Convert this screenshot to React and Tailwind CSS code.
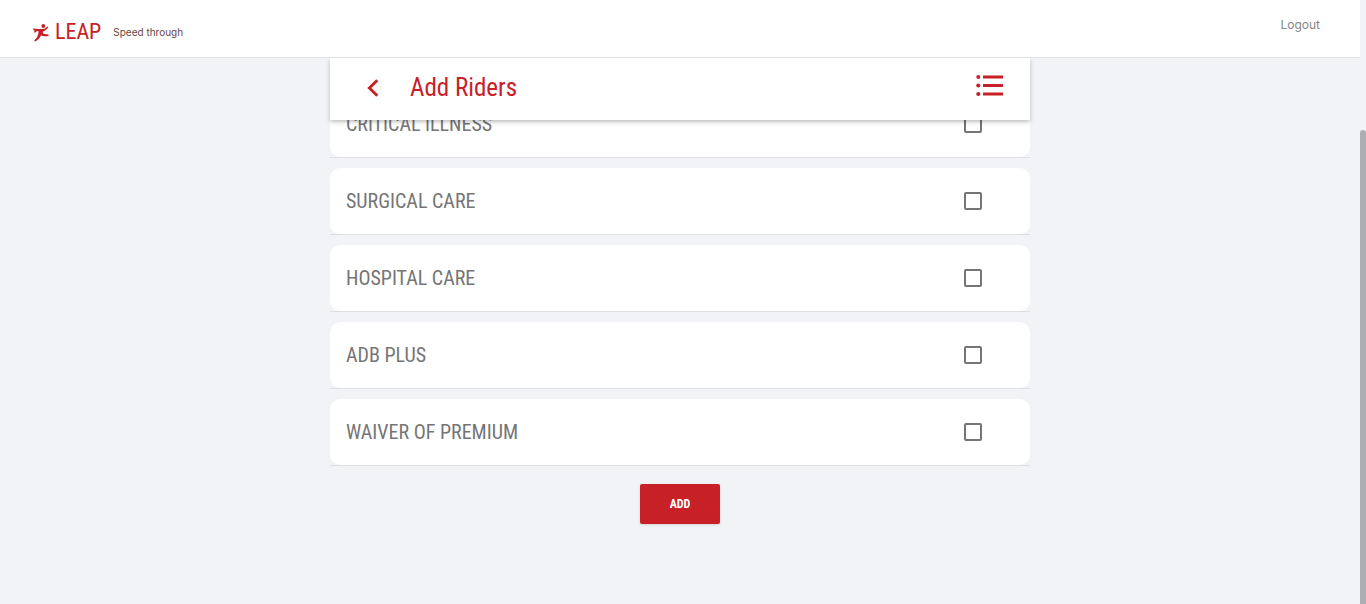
const riders = ['Critical Illness', 'Surgical Care', 'Hospital Care', 'ADB Plus', 'Waiver of Premium'];
const brandFont = "font-['Roboto_Condensed','Roboto',sans-serif]";

function Runner() {
  return (
    <svg viewBox="0 0 16 18" className="mt-px h-[18px] w-4" aria-hidden="true">
      <circle cx="10.3" cy="2" r="1.9" fill="#c72027" />
      <path d="M0.2 4.6 L5 4.9 L9 4.9 L11.5 4.8 L14.6 2.6 L15.4 3.6 L12.2 6.5 L10 7.5 L9.8 9.3 L11.5 10 L15.6 10.6 L15.4 12.3 L10.8 12.3 L8 11.5 L5.9 14.7 L2.5 17.6 L1.2 16.4 L4.1 13.2 L5.3 9.9 L5.6 7.3 L4 7 L2 8.8 L0.9 8 L1.9 6.4 L0.2 5.9 Z" fill="#c72027" />
    </svg>
  );
}

function TopBar() {
  return (
    <header className="relative z-20 flex h-[58px] items-start justify-between border-b border-[#e1e2e7] bg-white pr-10 pl-[33px]">
      <div className="flex items-center pt-5">
        <Runner />
        <span className={`${brandFont} ml-1.5 text-[22px] leading-6 text-[#c72027]`}>LEAP</span>
        <span className="ml-3 font-['Inter',sans-serif] text-[10px] leading-6 text-[#6b4543]">Speed through</span>
      </div>
      <a href="#logout" className="pt-4 font-['Inter',sans-serif] text-xs leading-[18px] text-[#858585]">Logout</a>
    </header>
  );
}

function RiderRow({ name }) {
  return (
    <li className="border-b border-[#dedfe2]">
      <label className="flex h-[66px] items-center justify-between rounded-[10px] bg-white pr-12 pl-4">
        <span className={`${brandFont} text-xl leading-6 text-[#757575] uppercase`}>{name}</span>
        <input type="checkbox" className="size-[18px] appearance-none rounded-xs border-2 border-[#757575] bg-white checked:bg-[#c72027]" />
      </label>
    </li>
  );
}

export default function App() {
  return (
    <div className="flex min-h-screen bg-[#f1f3f7]">
      <div className="min-w-0 flex-1">
        <TopBar />
        <main className="mx-auto max-w-[700px]">
          <div className="relative z-10 flex h-[62px] items-center bg-white pr-[27px] pb-0.5 pl-[37px] shadow-[0_2px_4px_rgba(0,0,0,0.25)]">
            <button type="button" aria-label="Back" className="w-[43px]">
              <svg viewBox="0 0 12 18" className="h-[18px] w-3" aria-hidden="true">
                <path d="M10.3 1.2 L2.4 9 L10.3 16.8" fill="none" stroke="#c72027" strokeWidth="3" />
              </svg>
            </button>
            <h1 className={`${brandFont} flex-1 text-[25px] leading-7 text-[#c72027]`}>Add Riders</h1>
            <button type="button" aria-label="Rider list" className="pb-1">
              <svg viewBox="0 0 27 22" className="h-[22px] w-[27px]" fill="#c72027" aria-hidden="true">
                <circle cx="2.3" cy="2" r="2" />
                <circle cx="2.3" cy="10.5" r="2.1" />
                <circle cx="2.3" cy="19" r="2.1" />
                <path d="M7 0.5h20v3H7z M7 9h20v3H7z M7 17.5h20v3H7z" />
              </svg>
            </button>
          </div>
          <ul className="-mt-[29px] flex flex-col gap-2.5">
            {riders.map((name) => <RiderRow key={name} name={name} />)}
          </ul>
          <div className="flex justify-center pt-[18px]">
            <button type="button" className={`${brandFont} h-10 w-20 rounded-xs bg-[#c72027] text-xs font-bold text-white shadow-sm`}>ADD</button>
          </div>
        </main>
      </div>
      <div className="flex w-1.5 flex-col pt-[130px]" aria-hidden="true">
        <div className="flex-1 rounded-t-sm bg-[#adaeb2]" />
      </div>
    </div>
  );
}
